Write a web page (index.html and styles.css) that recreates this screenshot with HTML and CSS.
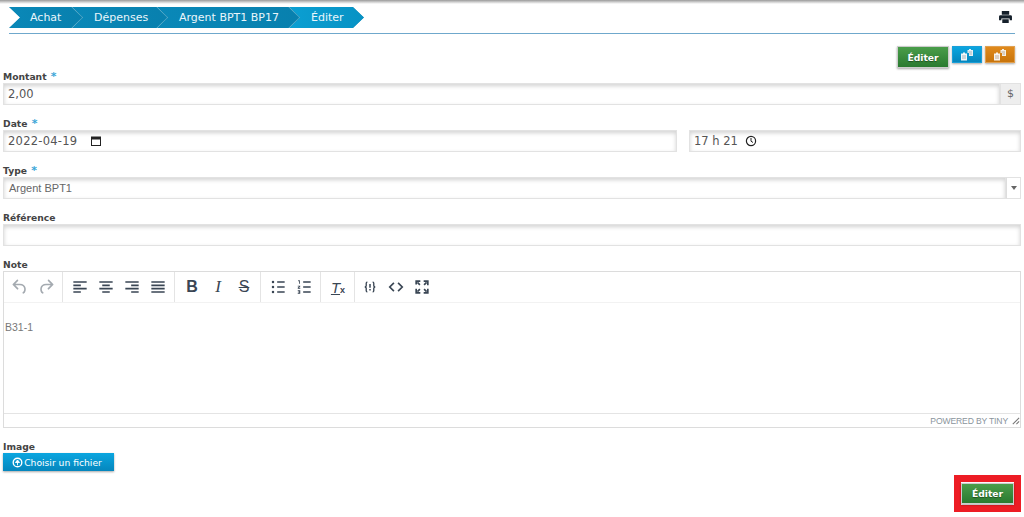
FILE: index.html
```html
<!DOCTYPE html>
<html lang="fr">
<head>
<meta charset="utf-8">
<title>Éditer</title>
<link rel="stylesheet" href="styles.css">
</head>
<body>
<div class="topstrip"></div>
<header class="head">
  <nav class="crumbs">
    <a class="crumb c1"><span>Achat</span></a>
    <a class="crumb c2"><span>Dépenses</span></a>
    <a class="crumb c3"><span>Argent BPT1 BP17</span></a>
    <a class="crumb c4"><span>Éditer</span></a>
  </nav>
  <svg class="print" viewBox="0 0 14 13"><path d="M3 0h8v4H3zM1.500 4.500h11A1.500 1.500 0 0 1 14 6v4h-2.500V8h-9v2H0V6a1.500 1.500 0 0 1 1.500-1.500zM3.500 9h7v4h-7z" fill="#15202b"/></svg>
</header>
<div class="actions">
  <button class="btn green top-edit">Éditer</button>
  <button class="btn small blue"><svg viewBox="0 0 14 12"><path d="M7.500 1h1.500V0h2v1h2v6H9V4H7.500z" fill="#e8f0f4"/><path d="M1 4.500h2V3.500h2v1h2v7H1z" fill="#f2f6f8"/><path d="M2 7h4M2 9h4" stroke="#8fa6b0" stroke-width=".8"/><path d="M8.500 3h3.500M9.500 5H12" stroke="#8fa6b0" stroke-width=".8"/></svg></button>
  <button class="btn small orange"><svg viewBox="0 0 14 12"><path d="M7.500 1h1.500V0h2v1h2v6H9V4H7.500z" fill="#f4efe8"/><path d="M1 4.500h2V3.500h2v1h2v7H1z" fill="#f8f4ee"/><path d="M2 7h4M2 9h4" stroke="#b09a80" stroke-width=".8"/><path d="M8.500 3h3.500M9.500 5H12" stroke="#b09a80" stroke-width=".8"/></svg></button>
</div>
<main class="form">
  <div class="field">
    <label class="lab">Montant <i>*</i></label>
    <div class="row">
      <div class="box grow">2,00</div>
      <div class="addon">$</div>
    </div>
  </div>
  <div class="field">
    <label class="lab">Date <i>*</i></label>
    <div class="row gap">
      <div class="box date"><span>2022-04-19</span>
        <svg class="ic" viewBox="0 0 12 12"><path d="M1 1.500h10V11H1zM2 3v7h8V4.500H2z" fill="#222" fill-rule="evenodd"/></svg>
      </div>
      <div class="box time"><span>17 h 21</span>
        <svg class="ic" viewBox="0 0 12 12"><circle cx="6" cy="6" r="4.600" fill="none" stroke="#222" stroke-width="1.200"/><path d="M6 3v3.200l2 1.300" fill="none" stroke="#222"/></svg>
      </div>
    </div>
  </div>
  <div class="field">
    <label class="lab">Type <i>*</i></label>
    <div class="row">
      <div class="box grow sel">Argent BPT1</div>
      <div class="caret"><b></b></div>
    </div>
  </div>
  <div class="field">
    <label class="lab">Référence</label>
    <div class="row"><div class="box grow"></div></div>
  </div>
  <div class="field">
    <label class="lab">Note</label>
    <div class="editor">
      <div class="toolbar">
        <div class="tgroup first">
          <span class="tool dim"><svg viewBox="0 0 24 24"><path d="M6.400 8H12c3.700 0 6.200 2 6.800 5.100.6 2.700-.4 5.600-2.300 6.800a1 1 0 0 1-1-1.800c1.100-.6 1.800-2.700 1.400-4.600-.5-2.100-2.100-3.500-4.900-3.500H6.400l3.300 3.300a1 1 0 1 1-1.400 1.400l-5-5a1 1 0 0 1 0-1.400l5-5a1 1 0 0 1 1.400 1.400L6.400 8z"/></svg></span>
          <span class="tool dim"><svg viewBox="0 0 24 24"><path transform="matrix(-1 0 0 1 24 0)" d="M6.400 8H12c3.700 0 6.200 2 6.800 5.100.6 2.700-.4 5.600-2.300 6.800a1 1 0 0 1-1-1.800c1.100-.6 1.800-2.700 1.400-4.600-.5-2.100-2.100-3.500-4.900-3.500H6.400l3.300 3.300a1 1 0 1 1-1.400 1.400l-5-5a1 1 0 0 1 0-1.400l5-5a1 1 0 0 1 1.400 1.400L6.400 8z"/></svg></span>
        </div>
        <div class="tgroup">
          <span class="tool"><svg viewBox="0 0 24 24"><path d="M4 5h16v2H4zM4 9h9v2H4zM4 13h16v2H4zM4 17h9v2H4z"/></svg></span>
          <span class="tool"><svg viewBox="0 0 24 24"><path d="M4 5h16v2H4zM7.500 9h9v2h-9zM4 13h16v2H4zM7.500 17h9v2h-9z"/></svg></span>
          <span class="tool"><svg viewBox="0 0 24 24"><path d="M4 5h16v2H4zM11 9h9v2h-9zM4 13h16v2H4zM11 17h9v2h-9z"/></svg></span>
          <span class="tool"><svg viewBox="0 0 24 24"><path d="M4 5h16v2H4zM4 9h16v2H4zM4 13h16v2H4zM4 17h16v2H4z"/></svg></span>
        </div>
        <div class="tgroup">
          <span class="tool glyph bold">B</span>
          <span class="tool glyph ital">I</span>
          <span class="tool glyph strike">S</span>
        </div>
        <div class="tgroup">
          <span class="tool"><svg viewBox="0 0 24 24"><path d="M11 5h9v2h-9zM11 11h9v2h-9zM11 17h9v2h-9z"/><circle cx="6" cy="6" r="1.500"/><circle cx="6" cy="12" r="1.500"/><circle cx="6" cy="18" r="1.500"/></svg></span>
          <span class="tool"><svg viewBox="0 0 24 24"><path d="M11 5h9v2h-9zM11 11h9v2h-9zM11 17h9v2h-9zM5 4h2v4H6V5H5zM4.500 10.500h3v1l-1.700 1.500h1.700v1h-3v-1l1.700-1.500H4.500zM4.500 16h3v4h-3v-1h2v-.5h-1v-1h1V17h-2z"/></svg></span>
        </div>
        <div class="tgroup">
          <span class="tool glyph clear"><u>T</u><small>x</small></span>
        </div>
        <div class="tgroup plain">
          <span class="tool narrow"><svg viewBox="0 0 24 24"><path d="M8.500 5.500C6.500 5.500 7 8 7 10s-1 2-2 2c1 0 2 0 2 2s-.5 4.500 1.500 4.500M15.500 5.500c2 0 1.500 2.500 1.500 4.500s1 2 2 2c-1 0-2 0-2 2s.5 4.500-1.500 4.500" fill="none" stroke="#3a4654" stroke-width="1.800"/><path d="M11 8h2v5h-2zM11 14.500h2v2h-2z"/></svg></span>
          <span class="tool"><svg viewBox="0 0 24 24"><path d="M9.500 7 4.500 12l5 5M14.500 7l5 5-5 5" fill="none" stroke="#3a4654" stroke-width="2"/></svg></span>
          <span class="tool"><svg viewBox="0 0 24 24"><path d="M4 4h6v2H6v3H4zM14 4h6v6h-2V6h-4zM4 14h2v4h4v2H4zM18 14h2v6h-6v-2h4z"/><path d="m6.500 6.500 3 3M17.500 6.500l-3 3M6.500 17.500l3-3M17.500 17.500l-3-3" stroke="#3a4654" stroke-width="2"/></svg></span>
        </div>
      </div>
      <div class="content">B31-1</div>
      <div class="status">
        <span>POWERED BY TINY</span>
        <svg viewBox="0 0 10 10"><path d="M9 2 2 9M9 6 6 9" stroke="#777" stroke-width="1.200" fill="none"/></svg>
      </div>
    </div>
  </div>
  <div class="upload">
    <label class="lab">Image</label>
    <button class="btn blue file">
      <svg viewBox="0 0 12 12"><circle cx="6" cy="6" r="4.700" fill="none" stroke="#fff" stroke-width="1.500"/><path d="M6 9V5M3.800 6 6 3.300 8.200 6z" stroke="#fff" fill="#fff"/></svg>Choisir un fichier
    </button>
  </div>
  <div class="submit">
    <div class="redbox"><button class="btn green">Éditer</button></div>
  </div>
</main>
</body>
</html>
```
FILE: styles.css
```css
* { box-sizing: border-box; }
html, body { margin: 0; padding: 0; }
body {
  width: 1024px;
  height: 517px;
  overflow: hidden;
  background: #fff;
  font-family: "DejaVu Sans", Verdana, sans-serif;
  font-size: 11px;
  color: #555;
}
.topstrip {
  height: 4px;
  background: linear-gradient(#9a9a9a, #d8d8d8 60%, #fff);
}
.head {
  display: flex;
  align-items: flex-start;
  justify-content: space-between;
  margin: 0 9px;
  padding: 3px 0 0;
  height: 30px;
  border-bottom: 1px solid #6fa8cc;
}
.crumbs { display: flex; }
.crumb {
  position: relative;
  height: 21px;
  margin-left: -11px;
  background: #2a93ba;
  clip-path: polygon(0 0, calc(100% - 11px) 0, 100% 50%, calc(100% - 11px) 100%, 0 100%, 11px 50%);
  color: #eaf6fb;
  font-size: 11px;
  line-height: 21px;
}
.crumb::before {
  content: "";
  position: absolute;
  inset: 0 1px 0 0;
  background: linear-gradient(90deg, #0a88b8, #0880ae);
  clip-path: polygon(0 0, calc(100% - 11px) 0, 100% 50%, calc(100% - 11px) 100%, 0 100%, 11px 50%);
}
.crumb span { position: relative; }
.c1 { margin-left: 0; width: 74px; padding-left: 21px; z-index: 4; }
.c2 { width: 96px; padding-left: 22px; z-index: 3; }
.c3 { width: 143px; padding-left: 22px; z-index: 2; }
.c4 { width: 75px; padding-left: 22px; z-index: 1; }
.c4::before { inset: 0; background: linear-gradient(90deg, #0b9fd2, #0792c4); }
.print { width: 13px; height: 12px; margin: 4px 3px 0 0; }

.actions {
  display: flex;
  justify-content: flex-end;
  align-items: flex-start;
  gap: 3px;
  padding: 12px 9px 0 0;
  height: 36px;
}
.btn {
  display: inline-flex;
  align-items: center;
  justify-content: center;
  border: 1px solid #ccc;
  padding: 0;
  font-family: "DejaVu Sans", Verdana, sans-serif;
  font-weight: 700;
  font-size: 9.200px;
  color: #fff;
  box-shadow: 0 1px 2px rgba(0, 0, 0, .35);
  text-shadow: 0 1px 1px rgba(0, 0, 0, .4);
}
.green { background: linear-gradient(#4a9d4a, #2a7a30); }
.blue { background: linear-gradient(#0ba6e0, #0586bd); border-color: #1a9fd8; }
.orange { background: linear-gradient(#e08a1c, #c8740c); border-color: #e0a050; }
.top-edit { width: 52px; height: 22px; }
.small { width: 30px; height: 17px; }
.small svg { width: 14px; height: 12px; }
.form { padding: 0 3px; }
.field { margin-bottom: 12px; }
.lab {
  display: block;
  height: 13px;
  font-family: "DejaVu Sans", Verdana, sans-serif;
  font-weight: 700;
  font-size: 9.200px;
  line-height: 13px;
  color: #444;
}
.lab i { color: #3aa6d8; font-style: normal; font-size: 11px; margin-left: 1px; }
.row { display: flex; height: 22px; width: 1018px; }
.gap { gap: 12px; }
.box {
  display: flex;
  align-items: center;
  height: 22px;
  padding: 0 4px;
  border: 1px solid #e2e2e2;
  background: #fff;
  box-shadow: inset 0 2px 4px rgba(0, 0, 0, .18);
  font-size: 11.500px;
  color: #555;
}
.grow { flex: 1; }
.addon {
  width: 21px;
  background: #eee;
  border: 1px solid #e2e2e2;
  text-align: center;
  line-height: 20px;
  font-size: 11px;
  color: #666;
}
.date { width: 674px; letter-spacing: .25px; }
.time { flex: 1; }
.ic { width: 12px; height: 12px; margin-left: 13px; }
.time .ic { margin-left: 7px; }
.sel { font-family: "Liberation Sans", Arial, sans-serif; font-size: 11px; padding-left: 5px; color: #666; }
.caret {
  width: 15px;
  border: 1px solid #e2e2e2;
  border-left-color: #ddd;
  display: flex;
  align-items: center;
  justify-content: center;
}
.caret b {
  border: 3px solid transparent;
  border-top: 4px solid #666;
  border-bottom: 0;
}
.editor {
  width: 1018px;
  height: 157px;
  border: 1px solid #dcdcdc;
  display: flex;
  flex-direction: column;
}
.toolbar {
  display: flex;
  height: 31px;
  border-bottom: 1px solid #f2f2f2;
}
.tgroup {
  display: flex;
  align-items: center;
  gap: 2px;
  padding: 0 4px 0 5px;
  border-right: 1px solid #e4e4e4;
}
.first { padding-left: 4px; }
.plain { border-right: 0; padding-left: 3px; }
.tool {
  display: flex;
  align-items: center;
  justify-content: center;
  width: 24px;
  height: 24px;
  color: #3a4654;
}
.tool svg { width: 20px; height: 20px; fill: #3a4654; }
.narrow svg { width: 18px; height: 18px; }
.dim svg { fill: #a4aab0; }
.glyph { font-family: "Liberation Sans", Arial, sans-serif; font-size: 16px; }
.bold { font-weight: 700; }
.ital { font-style: italic; font-family: "Liberation Serif", serif; font-size: 17px; }
.strike { text-decoration: line-through; }
.clear { font-style: italic; font-family: "Liberation Sans", sans-serif; font-size: 15px; }
.clear small { font-size: 9px; font-style: normal; font-weight: 700; margin-top: 6px; }
.content {
  flex: 1;
  padding: 18px 1px 0;
  font-family: "Liberation Sans", Arial, sans-serif;
  font-size: 10.500px;
  color: #777;
}
.status {
  height: 14px;
  border-top: 1px solid #e4e4e4;
  display: flex;
  align-items: center;
  justify-content: flex-end;
  gap: 3px;
  font-family: "Liberation Sans", Arial, sans-serif;
  font-size: 8.600px;
  letter-spacing: -.15px;
  color: #8a949c;
}
.status svg { width: 9px; height: 9px; }
.upload { margin-top: 12px; }
.file {
  width: 111px;
  height: 18px;
  gap: 1px;
  padding-right: 3px;
  font-family: "DejaVu Sans", sans-serif;
  font-weight: 400;
  font-size: 9.200px;
  border: 0;
  text-shadow: none;
}
.file svg { width: 11px; height: 11px; }
.submit { display: flex; justify-content: flex-end; margin-top: 4px; }
.redbox {
  width: 67px;
  height: 37px;
  border: 7px solid #ed1c24;
  background: #fff;
  display: flex;
  align-items: center;
  justify-content: center;
}
.redbox .btn { width: 53px; height: 21px; }
```
